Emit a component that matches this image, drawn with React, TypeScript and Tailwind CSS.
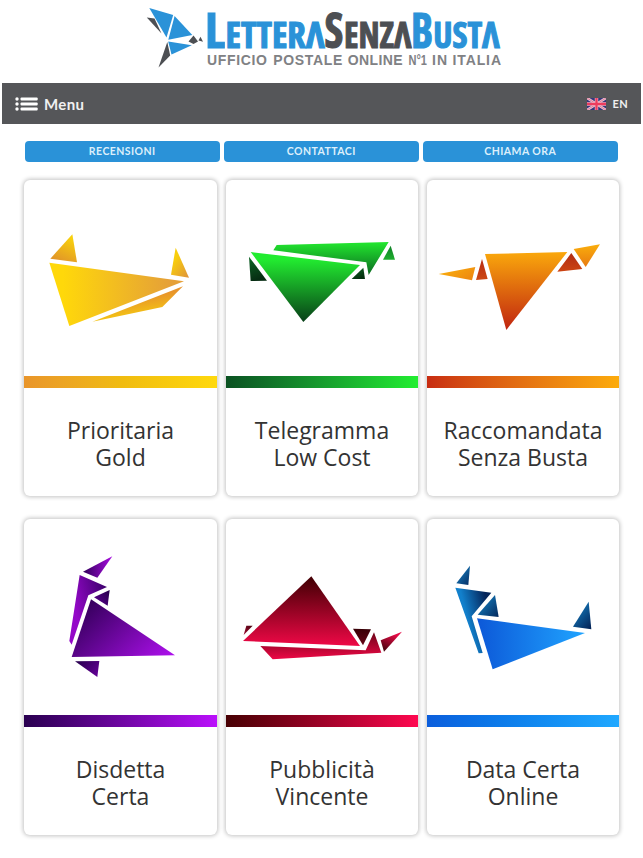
type Shape = {
  points: string;
  // gradient vector in the shape's own box: x1 y1 x2 y2
  dir: [number, number, number, number];
  from: string;
  to: string;
};

type Service = {
  id: string;
  lines: [string, string];
  bar: string;
  viewBox: string;
  shapes: Shape[];
};

const services: Service[] = [
  {
    id: 'gold',
    lines: ['Prioritaria', 'Gold'],
    bar: 'bg-linear-to-r from-[#e9952a] via-[#f0bb10] to-[#ffd90c]',
    viewBox: '12 15 579 588',
    shapes: [
      { points: '157,178 91,251 171,262', dir: [0.7, 0.1, 0.3, 1], from: '#f8d00c', to: '#e0932a' },
      { points: '467,218 453,299 507,308', dir: [0.3, 0.3, 0.9, 1], from: '#f8ce0c', to: '#e0963a' },
      { points: '88,263 492,319 148,453', dir: [0.1, 0, 0.9, 0], from: '#ffd80a', to: '#e5a038' },
      { points: '489,334 217,440 427,396', dir: [0.35, 0.35, 0.55, 0.9], from: '#e8942a', to: '#f6cc10' },
    ],
  },
  {
    id: 'telegram',
    lines: ['Telegramma', 'Low Cost'],
    bar: 'bg-linear-to-r from-[#0b5222] to-[#22ee30]',
    viewBox: '12 15 576 588',
    shapes: [
      { points: '164,210 500,201 440,300 433,262 154,226', dir: [0, 0, 0, 1], from: '#22e82e', to: '#0c6a22' },
      { points: '86,231 414,270 244,441', dir: [0, 0.1, 0, 1], from: '#22ec30', to: '#083f18' },
      { points: '81,245 135,317 86,318', dir: [0, 0, 0.3, 1], from: '#0e6626', to: '#062c12' },
      { points: '424,278 429,312 389,312', dir: [0, 0, 0.5, 1], from: '#0e6626', to: '#05300f' },
      { points: '506,212 519,254 483,254', dir: [0, 0, 0, 1], from: '#108028', to: '#1eae2e' },
    ],
  },
  {
    id: 'registered',
    lines: ['Raccomandata', 'Senza Busta'],
    bar: 'bg-linear-to-r from-[#c82c12] to-[#fcab0c]',
    viewBox: '15 15 576 588',
    shapes: [
      { points: '50,297 160,276 150,316', dir: [0, 0, 1, 0.6], from: '#fcb40c', to: '#ee8a10' },
      { points: '180,252 197,312 162,315', dir: [0, 0, 0, 1], from: '#b82c12', to: '#cc4814' },
      { points: '189,237 436,231 253,465', dir: [0, 0, 0, 1], from: '#faa80c', to: '#c02410' },
      { points: '448,234 481,282 406,290', dir: [0, 0, 0, 1], from: '#b02c14', to: '#cc4412' },
      { points: '455,222 534,208 491,276', dir: [0.5, 0, 0.5, 1], from: '#faae0c', to: '#e87a10' },
    ],
  },
  {
    id: 'cancel',
    lines: ['Disdetta', 'Certa'],
    bar: 'bg-linear-to-r from-[#2a0050] to-[#bb10fc]',
    viewBox: '12 26 579 588',
    shapes: [
      { points: '277,138 189,184 232,202', dir: [0, 0.4, 1, 0.4], from: '#30005a', to: '#a80ce0' },
      { points: '179,194 261,230 205,255 155,403 148,392', dir: [1, 0.1, 0.15, 0.5], from: '#380068', to: '#9408c8' },
      { points: '269,239 263,286 222,261', dir: [1, 0, 0, 0.8], from: '#240048', to: '#5c0090' },
      { points: '213,267 465,435 155,440', dir: [0, 0.4, 1, 1], from: '#3a0062', to: '#b010f0' },
      { points: '165,453 238,452 232,500', dir: [0, 0, 1, 0.6], from: '#24004a', to: '#5e0090' },
    ],
  },
  {
    id: 'advertising',
    lines: ['Pubblicità', 'Vincente'],
    bar: 'bg-linear-to-r from-[#480004] to-[#ff0850]',
    viewBox: '12 26 576 588',
    shapes: [
      { points: '73,346 92,346 65,374', dir: [1, 0, 0, 1], from: '#480410', to: '#a00830' },
      { points: '268,198 414,407 63,392', dir: [0, 0.05, 0, 1], from: '#480006', to: '#ee0846' },
      { points: '115,407 431,420 456,366 478,427 152,447', dir: [0, 0, 0, 1], from: '#6c0418', to: '#ee0846' },
      { points: '393,355 447,357 423,405', dir: [0, 0, 0, 1], from: '#380006', to: '#680416' },
      { points: '540,364 476,390 486,424', dir: [0.6, 0.1, 0.2, 0.9], from: '#e40c46', to: '#500410' },
    ],
  },
  {
    id: 'date',
    lines: ['Data Certa', 'Online'],
    bar: 'bg-linear-to-r from-[#0c5edc] to-[#20a8ff]',
    viewBox: '14 26 576 588',
    shapes: [
      { points: '143,166 138,224 102,219', dir: [0.3, 0.2, 1, 1], from: '#1474b4', to: '#042c62' },
      { points: '99,232 207,247 148,318 181,428 169,429', dir: [0.8, 0.05, 0.25, 0.3], from: '#04255a', to: '#1280cc' },
      { points: '218,254 229,320 166,313', dir: [1, 1, 0.2, 0.3], from: '#04285c', to: '#1274b4' },
      { points: '164,324 488,368 211,477', dir: [0, 0, 1, 0], from: '#0c58d8', to: '#20a4ff' },
      { points: '499,274 507,357 452,349', dir: [0.3, 0.2, 0.9, 1], from: '#1272b2', to: '#042458' },
    ],
  },
];

const links = ['RECENSIONI', 'CONTATTACI', 'CHIAMA ORA'];

const tagline = [
  { word: 'UFFICIO', x: 207, width: 60 },
  { word: 'POSTALE', x: 273.3, width: 69 },
  { word: 'ONLINE', x: 347.7, width: 55 },
  { word: 'N°1', x: 408.5, width: 18.5 },
  { word: 'IN', x: 432, width: 15 },
  { word: 'ITALIA', x: 452.5, width: 48.5 },
];

function Logo() {
  return (
    <svg viewBox="0 0 643 83" className="block h-[83px] w-[643px]" aria-label="LetteraSenzaBusta">
      {/* Origami bird */}
      <g fill="#2a92d8">
        <polygon points="149.3,8 173.2,15 166.5,37.5" />
        <polygon points="174.6,16 192.3,35 168.3,39.8" />
        <polygon points="168.2,41.5 191.8,45.2 171.5,54.5" />
      </g>
      <g fill="#4d4f53">
        <polygon points="146.8,17.5 154.5,18.5 161.5,33.5" />
        <polygon points="167.3,42 170.2,55.5 158.5,67.5" />
        <polygon points="193.5,35.5 198,41.5 193.5,44 188.5,41.5" />
        <polygon points="200.5,36.8 203,41.8 198.5,40.5" />
      </g>

      {/* Wordmark, large initials over small capitals */}
      <g className="font-['Open_Sans'] font-bold [font-stretch:75%]">
        <g fill="#2a92d8" stroke="#2a92d8" strokeWidth="1.1">
          <text x="205" y="47.6" fontSize="49" textLength="20" lengthAdjust="spacingAndGlyphs">L</text>
          <text x="225.5" y="47.6" fontSize="36.5" textLength="99" lengthAdjust="spacingAndGlyphs">ETTERΛ</text>
          <text x="411" y="47.6" fontSize="49" textLength="22" lengthAdjust="spacingAndGlyphs">B</text>
          <text x="433.2" y="47.6" fontSize="36.5" textLength="66.5" lengthAdjust="spacingAndGlyphs">USTΛ</text>
        </g>
        <g fill="#4d4f53" stroke="#4d4f53" strokeWidth="1.1">
          <text x="324.5" y="47.6" fontSize="49" textLength="18.8" lengthAdjust="spacingAndGlyphs">S</text>
          <text x="344" y="47.6" fontSize="36.5" textLength="67.5" lengthAdjust="spacingAndGlyphs">ENZΛ</text>
        </g>
      </g>
      <g fill="#808184" fontFamily="'Liberation Sans'" fontWeight="700" fontSize="14">
        {tagline.map((t) => (
          <text key={t.word} x={t.x} y="64.5" textLength={t.width} lengthAdjust={t.word === 'N°1' ? 'spacingAndGlyphs' : 'spacing'}>
            {t.word}
          </text>
        ))}
      </g>
    </svg>
  );
}

function MenuIcon() {
  return (
    <svg viewBox="0 0 23 14" className="h-[14px] w-[23px]" fill="#fff">
      {[2, 7, 12].map((y) => (
        <g key={y}>
          <circle cx="2" cy={y} r="1.7" />
          <rect x="5.5" y={y - 1.5} width="17.2" height="3" rx="1" />
        </g>
      ))}
    </svg>
  );
}

function Flag() {
  return (
    <svg viewBox="0 0 19 12" className="h-3 w-[19px]">
      <rect width="19" height="12" fill="#35377c" />
      <path d="M0 0l19 12M19 0L0 12" stroke="#eec3d3" strokeWidth="2.6" />
      <path d="M0 0l19 12M19 0L0 12" stroke="#df6f8c" strokeWidth="0.8" />
      <path d="M9.5 0v12M0 6h19" stroke="#f3c5d2" strokeWidth="3.4" />
      <path d="M9.5 0v12M0 6h19" stroke="#ee3c5e" strokeWidth="2.3" />
    </svg>
  );
}

function Bird({ service }: { service: Service }) {
  return (
    <svg viewBox={service.viewBox} preserveAspectRatio="none" className="block h-[196px] w-full">
      <defs>
        {service.shapes.map((s, i) => (
          <linearGradient key={i} id={`${service.id}-${i}`} x1={s.dir[0]} y1={s.dir[1]} x2={s.dir[2]} y2={s.dir[3]}>
            <stop offset="0" stopColor={s.from} />
            <stop offset="1" stopColor={s.to} />
          </linearGradient>
        ))}
      </defs>
      {service.shapes.map((s, i) => (
        <polygon key={i} points={s.points} fill={`url(#${service.id}-${i})`} />
      ))}
    </svg>
  );
}

function Card({ service }: { service: Service }) {
  return (
    <a className="block h-[316px] rounded-[6px] bg-white shadow-[0_0_4px_1px_rgba(0,0,0,0.24)]">
      <Bird service={service} />
      <div className={`h-3 ${service.bar}`} />
      <h2 className="pt-[29px] text-center text-[23px] leading-[27px] text-[#333]">
        {service.lines[0]}
        <br />
        {service.lines[1]}
      </h2>
    </a>
  );
}

export default function App() {
  return (
    <div className="h-[858px] w-[643px] overflow-hidden bg-white font-['Open_Sans',sans-serif]">
      <header>
        <Logo />
        <nav className="mr-[2px] ml-[2px] flex h-[41px] items-center bg-[#555659] pr-[13px] pl-[13px] font-['Lato',sans-serif] text-[#f0f0f0]">
          <MenuIcon />
          <span className="ml-[6px] pt-px text-[15px] font-bold tracking-[0.4px]">Menu</span>
          <div className="ml-auto flex items-center gap-[7px] pt-px">
            <Flag />
            <span className="text-[11px] font-bold tracking-[0.3px]">EN</span>
          </div>
        </nav>
      </header>

      {/* Quick links */}
      <div className="mt-[17px] flex gap-[3.5px] pl-[24.5px]">
        {links.map((label) => (
          <a
            key={label}
            className="flex h-[21px] w-[195.5px] items-center justify-center rounded-[4px] bg-[#2a92d8] pt-px font-['Lato',sans-serif] text-[10.5px] font-bold tracking-[0.45px] text-[#dceffb]"
          >
            {label}
          </a>
        ))}
      </div>

      {/* Services */}
      <main className="mt-[18px] grid grid-cols-[193px_192px_192px] gap-x-[9px] gap-y-[22.5px] pl-6">
        {services.map((service) => (
          <Card key={service.id} service={service} />
        ))}
      </main>
    </div>
  );
}
